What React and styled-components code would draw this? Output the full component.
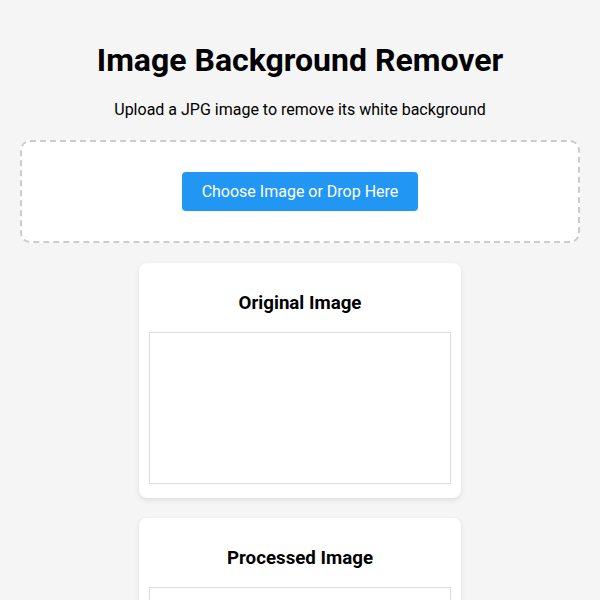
import styled, { createGlobalStyle } from "styled-components";

const GlobalStyle = createGlobalStyle`
  body {
    margin: 0;
    background: #f5f5f5;
    font-family: Roboto, "Liberation Sans", Arial, sans-serif;
    color: #000;
  }
`;

export default function App() {
  return (
    <>
      <GlobalStyle />
      <Page>
        <Title>Image Background Remover</Title>
        <Subtitle>Upload a JPG image to remove its white background</Subtitle>
        <DropZone>
          <UploadButton>Choose Image or Drop Here</UploadButton>
        </DropZone>
        <Previews>
          <PreviewCard>
            <CardTitle>Original Image</CardTitle>
            <ImageBox />
          </PreviewCard>
          <PreviewCard>
            <CardTitle>Processed Image</CardTitle>
            <ImageBox />
          </PreviewCard>
        </Previews>
      </Page>
    </>
  );
}

const Page = styled.div`
  padding: 20px;
  text-align: center;
`;

const Title = styled.h1`
  font-size: 32px;
  font-weight: 700;
  margin: 21px 0;
`;

const Subtitle = styled.p`
  font-size: 16px;
  margin: 0 0 21px;
`;

const DropZone = styled.div`
  background: #fff;
  border: 2px dashed #ccc;
  border-radius: 10px;
  padding: 30px 20px;
`;

const UploadButton = styled.button`
  background: #2196f3;
  color: #fff;
  border: none;
  border-radius: 4px;
  padding: 10px 20px;
  font-family: Roboto, "Liberation Sans", Arial, sans-serif;
  font-size: 16px;
  cursor: pointer;
`;

const Previews = styled.div`
  display: flex;
  flex-direction: column;
  align-items: center;
  gap: 20px;
  margin-top: 20px;
`;

const PreviewCard = styled.div`
  background: #fff;
  border-radius: 8px;
  box-shadow: 0 2px 5px rgba(0, 0, 0, 0.1);
  padding: 10px;
`;

const CardTitle = styled.h3`
  font-size: 18.72px;
  font-weight: 700;
  margin: 19px 0 18px;
`;

const ImageBox = styled.div`
  width: 300px;
  height: 150px;
  border: 1px solid #ddd;
  margin-bottom: 4px;
`;
